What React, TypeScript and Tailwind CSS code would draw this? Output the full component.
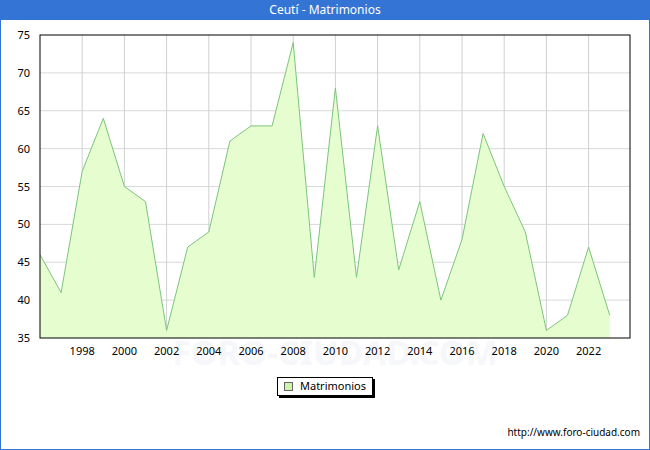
const DATA = [46, 41, 57, 64, 55, 53, 36, 47, 49, 61, 63, 63, 74, 43, 68, 43, 63, 44, 53, 40, 48, 62, 55, 49, 36, 38, 47, 38];

const X0 = 40, X1 = 630, Y0 = 35, Y1 = 338;
const px = (i: number) => X0 + i * 21.1;
const py = (v: number) => Y1 - ((v - 35) / 40) * (Y1 - Y0);

export default function App() {
  const pts = DATA.map((v, i) => `${px(i)},${py(v)}`).join(" ");
  const area = `${X0},${Y1} ${pts} ${px(DATA.length - 1)},${Y1}`;
  return (
    <div className="w-[650px] h-[450px] flex flex-col bg-white border border-[#3474d4] font-['DejaVu_Sans',sans-serif] text-[11px] text-black">
      <div className="h-[20px] -mx-px -mt-px bg-[#3474d4] text-white text-[12px] flex items-center justify-center">Ceutí - Matrimonios</div>
      <div className="relative flex-1">
        <svg width="648" height="429" className="absolute -left-px font-['DejaVu_Sans',sans-serif]" style={{ top: -20 }}>
          {[40, 45, 50, 55, 60, 65, 70].map((v) => (
            <line key={v} x1={X0} x2={X1} y1={py(v)} y2={py(v)} stroke="#d9d9d9" />
          ))}
          {Array.from({ length: 13 }, (_, k) => px(2 + 2 * k)).map((x) => (
            <line key={x} x1={x} x2={x} y1={Y0} y2={Y1} stroke="#d0d0d0" />
          ))}
          <polygon points={area} fill="#e6fdd0" stroke="none" />
          <text x="335" y="365" textAnchor="middle" fontSize="34" fill="#f2f4f8" fillOpacity="0.7" fontWeight="bold">FORO-CIUDAD.COM</text>
          <polyline points={pts} fill="none" stroke="#7cc47c" strokeWidth="1" />
          <rect x={X0} y={Y0} width={X1 - X0} height={Y1 - Y0} fill="none" stroke="#000" />
          {[35, 40, 45, 50, 55, 60, 65, 70, 75].map((v) => (
            <text key={v} x="30" y={py(v) + 4} textAnchor="end" fontSize="11">{v}</text>
          ))}
          {Array.from({ length: 13 }, (_, k) => k).map((k) => (
            <text key={k} x={px(2 + 2 * k)} y="355" textAnchor="middle" fontSize="11">{1998 + 2 * k}</text>
          ))}
        </svg>
        <div className="absolute left-[276px] top-[357px] w-[96px] h-[19px] border border-black bg-white shadow-[2px_2px_0_#000] flex items-center gap-[7px] pl-[6px]">
          <span className="w-[9px] h-[9px] bg-[#ccf5a8] border border-[#666]" />
          <span>Matrimonios</span>
        </div>
        <div className="absolute right-[9px] bottom-[9px] text-[10px]">http://www.foro-ciudad.com</div>
      </div>
    </div>
  );
}
